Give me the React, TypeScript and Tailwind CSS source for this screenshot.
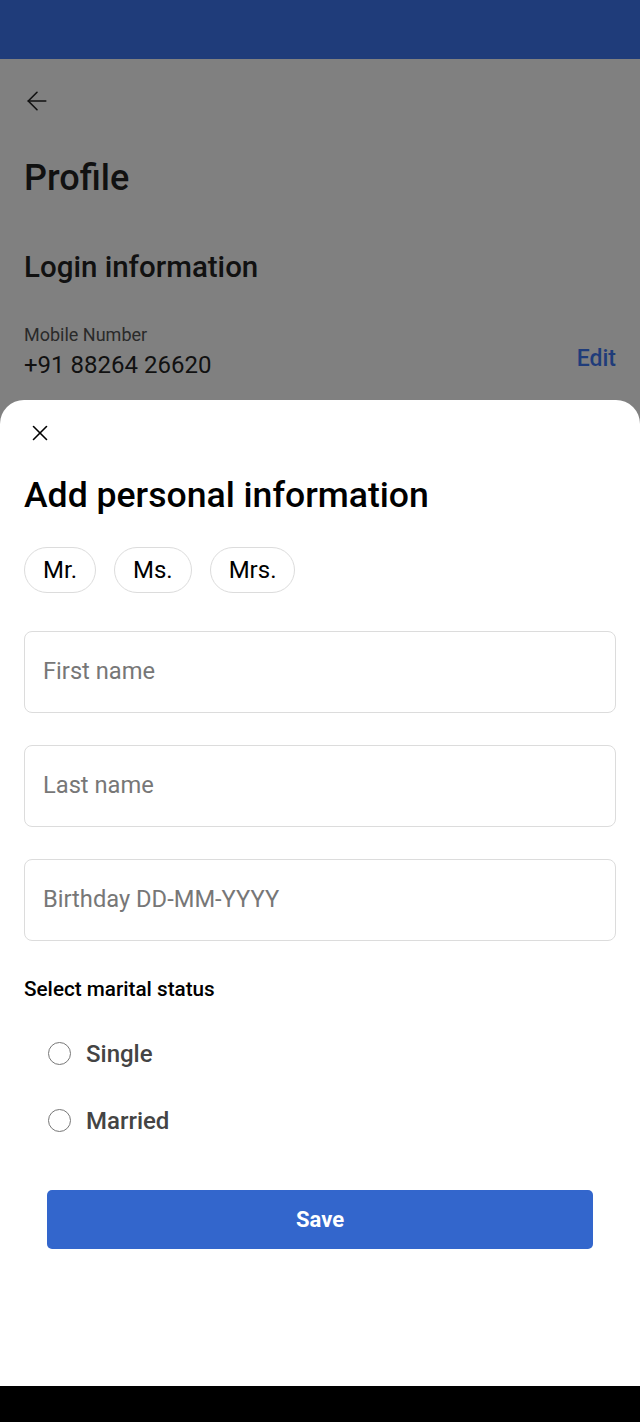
import { ArrowLeft, X } from 'lucide-react';

const font = { fontFamily: 'Roboto, "Noto Sans", sans-serif' };

function TitlePill({ label }: { label: string }) {
  return (
    <button className="h-[46px] px-[18px] rounded-full border border-[#dcdcdc] bg-white text-[24px] text-black leading-none">
      {label}
    </button>
  );
}

function Field({ placeholder }: { placeholder: string }) {
  return (
    <div className="h-[82px] rounded-[8px] border border-[#dcdcdc] flex items-center px-[18px]">
      <span className="text-[23.7px] text-[#777]">{placeholder}</span>
    </div>
  );
}

function Radio({ label }: { label: string }) {
  return (
    <label className="flex items-center gap-[15px] pl-[24px] h-[67px]">
      <span className="w-[23px] h-[23px] rounded-full border-[1.5px] border-[#777] bg-white" />
      <span className="text-[24px] font-medium text-[#444]">{label}</span>
    </label>
  );
}

export default function App() {
  return (
    <div className="w-[640px] h-[1422px] flex flex-col bg-[#808080] overflow-hidden" style={font}>
      {/* Status bar */}
      <div className="h-[59px] bg-[#1f3c7a] shrink-0" />

      {/* Page behind the sheet */}
      <div className="h-[341px] shrink-0 px-[24px] pt-[27px]">
        <ArrowLeft className="w-[30px] h-[30px] text-[#111] -ml-[2px]" strokeWidth={1.3} />
        <h1 className="mt-[44px] text-[36px] font-medium text-[#111] leading-none">Profile</h1>
        <h2 className="mt-[57px] text-[29.5px] font-medium text-[#111] leading-none">Login information</h2>
        <div className="mt-[43px] flex justify-between items-end">
          <div>
            <div className="text-[18px] text-[#2a2a2a] leading-none">Mobile Number</div>
            <div className="mt-[9px] text-[24px] text-[#111] leading-none">+91 88264 26620</div>
          </div>
          <div className="text-[23px] font-medium text-[#1f3c7a] leading-none pb-[7px]">Edit</div>
        </div>
      </div>

      {/* Bottom sheet */}
      <div className="flex-1 bg-white rounded-t-[24px] px-[24px] pt-[20px]">
        <X className="w-[26px] h-[26px] text-black ml-[3px]" strokeWidth={1.5} />
        <h3 className="mt-[32px] text-[35.6px] font-medium text-black leading-none">Add personal information</h3>
        <div className="mt-[33px] flex gap-[18px]">
          <TitlePill label="Mr." />
          <TitlePill label="Ms." />
          <TitlePill label="Mrs." />
        </div>
        <div className="mt-[38px] flex flex-col gap-[32px]">
          <Field placeholder="First name" />
          <Field placeholder="Last name" />
          <Field placeholder="Birthday DD-MM-YYYY" />
        </div>
        <div className="mt-[38px] text-[20.7px] font-medium text-black leading-none">Select marital status</div>
        <div className="mt-[21px] flex flex-col">
          <Radio label="Single" />
          <Radio label="Married" />
        </div>
        <div className="mt-[36px] px-[23px]">
          <button className="w-full h-[59px] rounded-[5px] bg-[#3366cc] text-white text-[22px] font-bold">
            Save
          </button>
        </div>
      </div>

      {/* Navigation bar */}
      <div className="h-[36px] bg-black shrink-0" />
    </div>
  );
}
